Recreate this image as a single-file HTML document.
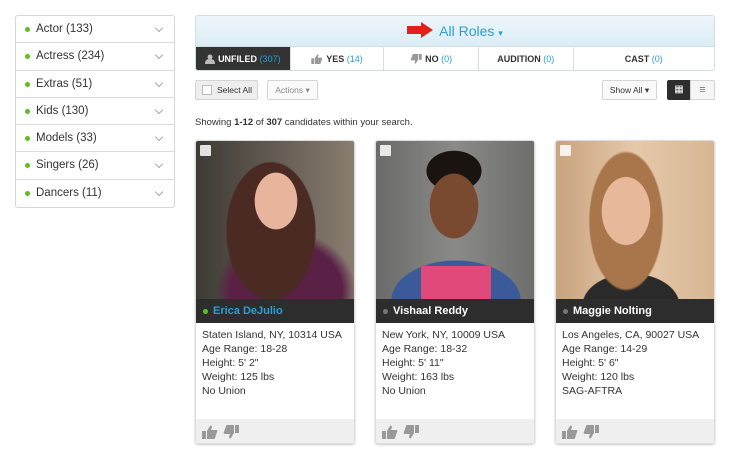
<!DOCTYPE html>
<html><head><style>
*{box-sizing:border-box;margin:0;padding:0}
body{width:730px;height:463px;background:#fff;font-family:"Liberation Sans",sans-serif;color:#333;position:relative;overflow:hidden}
.side{position:absolute;left:15px;top:15px;width:160px;border:1px solid #d6d6d6;border-radius:3px}
.side div{height:27.3px;border-bottom:1px solid #dcdcdc;font-size:11.5px;line-height:26px;padding-left:20px;position:relative;color:#333}
.side div:last-child{border-bottom:none}
.side div:before{content:"";position:absolute;left:9px;top:11px;width:5px;height:5px;border-radius:50%;background:#5cbf1e}
.side div:after{content:"";position:absolute;right:12px;top:9px;width:5px;height:5px;border-right:1px solid #aaa;border-bottom:1px solid #aaa;transform:rotate(45deg)}
.hdr{position:absolute;left:195px;top:15px;width:520px;height:56px;border:1px solid #cfdde5;border-radius:3px;overflow:hidden}
.band{height:30px;background:linear-gradient(#eef6fb,#dbecf5);text-align:center;font-size:14px;line-height:30px;color:#2a9fd6}
.tabs{display:flex;height:25px;background:#fff;border-top:1px solid #cfdde5}
.tabs div{font-size:9px;font-weight:bold;text-align:center;line-height:24px;border-right:1px solid #ddd;color:#333}
.tabs span{color:#2a9fd6;font-weight:normal}
.tabs svg{vertical-align:-2px;margin-right:3px}
.btn{position:absolute;top:80px;height:20px;border:1px solid #d5d5d5;border-radius:2px;font-size:8.5px;line-height:18px;background:#f6f6f6}
.card{position:absolute;top:140px;width:160px;height:304px;border:1px solid #ddd;border-radius:3px;overflow:hidden;box-shadow:0 1px 2px #ccc}
.photo{height:158px;position:relative}
.photo:before{content:"";position:absolute;left:4px;top:4px;width:11px;height:11px;background:#fff;opacity:.85;border-radius:1px}
.name{height:24px;background:#2d2d2d;color:#fff;font-size:11px;font-weight:bold;line-height:24px;padding-left:17px;position:relative}
.name:before{content:"";position:absolute;left:7px;top:10px;width:5px;height:5px;border-radius:50%;background:#777}
.info{height:96px;padding:5px 6px;font-size:10.5px;line-height:14px;color:#333}
.foot{height:26px;background:#efefef;padding:6px 6px}
.foot svg{margin-right:5px}
</style></head><body>
<svg width="0" height="0" style="position:absolute"><defs>
<symbol id="up" viewBox="0 0 16 14"><path d="M0 6h4v8H0zM5 6l3-5c1-1 2 0 2 1l-1 3h5c1 0 2 1 1 2l-2 6c0 1-1 1-2 1H5z" fill="#999"/></symbol>
<symbol id="dn" viewBox="0 0 16 14"><path d="M12 0h4v8h-4zM11 8l-3 5c-1 1-2 0-2-1l1-3H2C1 9 0 8 1 7l2-6c0-1 1-1 2-1h6z" fill="#999"/></symbol>
</defs></svg>
<div class="side">
<div>Actor (133)</div><div>Actress (234)</div><div>Extras (51)</div><div>Kids (130)</div><div>Models (33)</div><div>Singers (26)</div><div>Dancers (11)</div>
</div>
<div class="hdr">
<div class="band"><svg width="26" height="16" viewBox="0 0 26 16" style="vertical-align:-2px;margin-right:6px"><path d="M0 4h14V0l12 8-12 8v-4H0z" fill="#e0201b"/></svg>All Roles <span style="font-size:9px">▾</span></div>
<div class="tabs">
<div style="width:95px;background:#333;color:#fff"><svg width="10" height="10" viewBox="0 0 10 10"><circle cx="5" cy="3" r="2.5" fill="#bbb"/><path d="M0 10c0-4 2-5 5-5s5 1 5 5z" fill="#bbb"/></svg>UNFILED <span>(307)</span></div>
<div style="width:94px"><svg width="12" height="10"><use href="#up"/></svg>YES <span>(14)</span></div>
<div style="width:95px"><svg width="12" height="10"><use href="#dn"/></svg>NO <span>(0)</span></div>
<div style="width:95px">AUDITION <span>(0)</span></div>
<div style="width:141px;border-right:none">CAST <span>(0)</span></div>
</div></div>
<div class="btn" style="left:195px;width:63px;padding-left:21px;background:#eee">Select All<span style="position:absolute;left:6px;top:4px;width:10px;height:10px;background:#fff;border:1px solid #bbb"></span></div>
<div class="btn" style="left:267px;width:51px;text-align:center;color:#888;background:#fafafa">Actions ▾</div>
<div class="btn" style="left:602px;width:55px;text-align:center;background:#fafafa">Show All ▾</div>
<div class="btn" style="left:667px;width:24px;background:#2d2d2d;border-color:#2d2d2d;color:#fff;text-align:center;font-size:10px">▦</div>
<div class="btn" style="left:690px;width:25px;text-align:center;color:#777;font-size:11px">≡</div>
<div style="position:absolute;left:195px;top:117px;font-size:9.5px">Showing <b>1-12</b> of <b>307</b> candidates within your search.</div>

<div class="card" style="left:195px">
<div class="photo" style="background:radial-gradient(ellipse 30px 40px at 80px 60px,#e7b49c 70%,transparent 72%),radial-gradient(ellipse 55px 85px at 75px 90px,#4a2a22 80%,transparent 82%),radial-gradient(ellipse 70px 60px at 90px 150px,#5a2046 80%,transparent),linear-gradient(90deg,#3d3a35,#6b6258 60%,#8a7d70)"></div>
<div class="name" style="color:#2a9fd6"><span style="position:absolute;left:7px;top:10px;width:5px;height:5px;border-radius:50%;background:#5cbf1e"></span>Erica DeJulio</div>
<div class="info">Staten Island, NY, 10314 USA<br>Age Range: 18-28<br>Height: 5' 2"<br>Weight: 125 lbs<br>No Union</div>
<div class="foot"><svg width="16" height="14"><use href="#up"/></svg><svg width="16" height="14"><use href="#dn"/></svg></div></div>

<div class="card" style="left:375px">
<div class="photo" style="background:radial-gradient(ellipse 30px 40px at 78px 65px,#7a4a30 80%,transparent 82%),radial-gradient(ellipse 34px 25px at 78px 30px,#1a1410 80%,transparent 82%),linear-gradient(90deg,transparent 45px,#e04a7a 45px,#e04a7a 115px,transparent 115px) 0 125px/100% 40px no-repeat,radial-gradient(ellipse 80px 50px at 80px 160px,#3a5a9a 80%,transparent 82%),linear-gradient(90deg,#6a6a6a,#8a8a88 50%,#6d6e6c)"></div>
<div class="name">Vishaal Reddy</div>
<div class="info">New York, NY, 10009 USA<br>Age Range: 18-32<br>Height: 5' 11"<br>Weight: 163 lbs<br>No Union</div>
<div class="foot"><svg width="16" height="14"><use href="#up"/></svg><svg width="16" height="14"><use href="#dn"/></svg></div></div>

<div class="card" style="left:555px">
<div class="photo" style="background:radial-gradient(ellipse 30px 42px at 70px 70px,#e8b89a 80%,transparent 82%),radial-gradient(ellipse 48px 90px at 70px 80px,#a8764a 75%,transparent 78%),radial-gradient(ellipse 60px 40px at 75px 165px,#2a2a2a 80%,transparent 82%),linear-gradient(90deg,#c9a27e,#e6c9aa 50%,#d7b693)"></div>
<div class="name">Maggie Nolting</div>
<div class="info">Los Angeles, CA, 90027 USA<br>Age Range: 14-29<br>Height: 5' 6"<br>Weight: 120 lbs<br>SAG-AFTRA</div>
<div class="foot"><svg width="16" height="14"><use href="#up"/></svg><svg width="16" height="14"><use href="#dn"/></svg></div></div>
</body></html>
